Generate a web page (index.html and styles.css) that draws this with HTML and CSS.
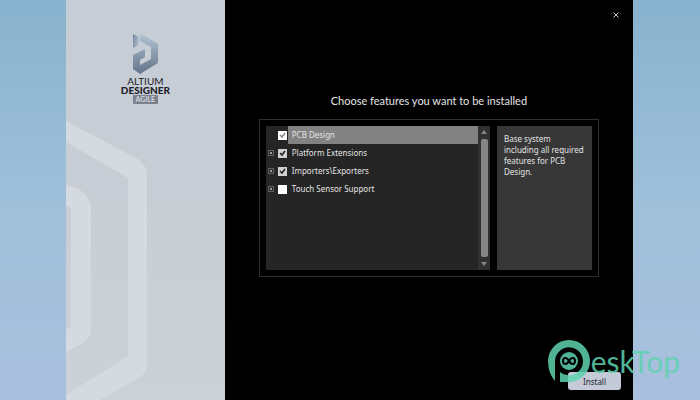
FILE: index.html
```html
<!DOCTYPE html>
<html lang="en">
<head>
<meta charset="utf-8">
<title>Altium Designer Agile Installer</title>
<link rel="stylesheet" href="styles.css">
</head>
<body>
<div class="installer">
    <aside class="sidebar">
        <svg class="pattern" viewBox="0 0 159 400" preserveAspectRatio="xMinYMin slice" aria-hidden="true">
            <path d="M0 121 L70 158 Q81 164 81 176 V363 Q81 373 73 378 L34 400 H-8 L62 356 V178 L0 142 Z"/>
            <path d="M0 185 L12 189 Q25 196 25 209 V329 Q25 338 15 344 L0 352 V330 L5 326 V208 L0 206 Z"/>
        </svg>
        <div class="brand">
            <svg class="logo" viewBox="0 0 27 41" aria-hidden="true">
                <defs>
                    <linearGradient id="steel" x1="0" y1="0" x2="0" y2="1">
                        <stop offset="0" stop-color="#b4c5d3"/>
                        <stop offset="0.45" stop-color="#8ea0b3"/>
                        <stop offset="1" stop-color="#64748a"/>
                    </linearGradient>
                    <linearGradient id="shade" x1="0" y1="0" x2="1" y2="0.4">
                        <stop offset="0" stop-color="#71849a"/>
                        <stop offset="1" stop-color="#adbecd"/>
                    </linearGradient>
                </defs>
                <path d="M8 0 L26 11 V30 L8 41 L1 36 V22 L13 16 V24 L8 27 V32 L19 26 V14 L8 8 Z" fill="url(#steel)"/>
                <path d="M1 1 L7 4 V12 L1 15 Z" fill="url(#shade)"/>
            </svg>
            <span class="brand-top">ALTIUM</span>
            <strong class="brand-name">DESIGNER</strong>
            <span class="edition">AGILE</span>
        </div>
    </aside>
    <main class="content">
        <button class="close" type="button" aria-label="Close">
            <svg viewBox="0 0 6 6" aria-hidden="true"><path d="M0.5 0.5 L5.5 5.5 M5.5 0.5 L0.5 5.5"/></svg>
        </button>
        <h1>Choose features you want to be installed</h1>
        <section class="features">
            <div class="tree">
                <ul class="list">
                    <li class="selected">
                        <span class="spacer"></span>
                        <input type="checkbox" id="pcb" checked>
                        <label for="pcb">PCB Design</label>
                    </li>
                    <li>
                        <button class="expand" type="button" aria-label="Expand Platform Extensions"></button>
                        <input type="checkbox" id="platform" checked>
                        <label for="platform">Platform Extensions</label>
                    </li>
                    <li>
                        <button class="expand" type="button" aria-label="Expand Importers\Exporters"></button>
                        <input type="checkbox" id="importers" checked>
                        <label for="importers">Importers\Exporters</label>
                    </li>
                    <li>
                        <button class="expand" type="button" aria-label="Expand Touch Sensor Support"></button>
                        <input type="checkbox" id="touch">
                        <label for="touch">Touch Sensor Support</label>
                    </li>
                </ul>
                <div class="scrollbar">
                    <svg viewBox="0 0 6 4" aria-hidden="true"><path d="M3 0 L6 4 H0 Z"/></svg>
                    <div class="thumb"></div>
                    <svg viewBox="0 0 6 4" aria-hidden="true"><path d="M0 0 H6 L3 4 Z"/></svg>
                </div>
            </div>
            <p class="info">Base system including all required features for PCB Design.</p>
        </section>
        <button class="install" type="button">Install</button>
    </main>
</div>
<div class="watermark">
    <svg viewBox="0 0 44 44" aria-hidden="true">
        <path d="M8 42 Q1 34 1 22 A21 21 0 1 1 22 43 H13 V33 A14 14 0 1 0 8 22 Z"/>
        <circle cx="22" cy="22" r="9"/>
        <path class="eight" d="M22 22 C20 18 16 18 16 22 C16 26 20 26 22 22 C24 18 28 18 28 22 C28 26 24 26 22 22 Z"/>
    </svg>
    <span>eskTop</span>
</div>
</body>
</html>
```

FILE: styles.css
```css
* {
    box-sizing: border-box;
}

body {
    margin: 0;
    min-height: 100vh;
    display: flex;
    position: relative;
    padding: 0 67px 0 66px;
    background: linear-gradient(#88b2ce, #9fc0da 50%, #a9c0de);
    font-family: "Noto Sans", "Open Sans", sans-serif;
    font-size: 8px;
}

button {
    padding: 0;
    border: 0;
    font: inherit;
}

svg {
    display: block;
}

.installer {
    flex: 1;
    display: grid;
    grid-template-columns: 28% 1fr;
    background: black;
}

.sidebar {
    position: relative;
    overflow: hidden;
    background: linear-gradient(#c5cdd5, #c9cdd5 50%, #cbd1d6);
}

.pattern {
    position: absolute;
    inset: 0;
    width: 100%;
    height: 100%;
    fill: #d5dae1;
}

.brand {
    position: relative;
    display: flex;
    flex-direction: column;
    align-items: center;
    padding-top: 33px;
    color: #1e2129;
    font-family: Lato, sans-serif;
    font-size: 10px;
    line-height: 9px;
}

.logo {
    width: 27px;
    height: 41px;
    margin-bottom: 3px;
}

.brand-name {
    font-weight: 900;
}

.edition {
    padding: 0 3px;
    border-radius: 1px;
    background: #7c818d;
    color: #d5d9e0;
    font-size: 7px;
    font-weight: bold;
}

.content {
    display: flex;
    flex-direction: column;
    padding: 12px 12px 10px 34px;
    color: #e4e4e4;
}

.close {
    align-self: flex-end;
    padding: 0 2px;
    background: none;
}

.close svg {
    width: 6px;
    height: 6px;
    stroke: #c8c8c8;
    fill: none;
}

h1 {
    margin: 75px 22px 10px 0;
    font-family: Lato, sans-serif;
    font-size: 11px;
    font-weight: normal;
    line-height: 16px;
    text-align: center;
}

.features {
    display: grid;
    grid-template-columns: 1fr 95px;
    gap: 7px;
    height: 158px;
    margin-right: 22px;
    padding: 6px;
    border: 1px solid #303030;
}

.tree {
    display: flex;
    background: #252525;
}

.list {
    flex: 1;
    margin: 0;
    padding: 0;
    list-style: none;
}

.list li {
    display: flex;
    align-items: center;
    height: 18px;
    padding-left: 2px;
}

.expand, .spacer {
    width: 6px;
    height: 6px;
    margin-right: 4px;
}

.expand {
    border: 1px solid #606060;
    background:
        linear-gradient(#a0a0a0, #a0a0a0) center / 2px 2px no-repeat;
}

.list input {
    appearance: none;
    width: 9px;
    height: 9px;
    margin: 0 1px 0 0;
    background: white;
}

.list input:checked {
    background: #d0d0d0 url("data:image/svg+xml,%3Csvg xmlns='http://www.w3.org/2000/svg' viewBox='0 0 9 9'%3E%3Cpath d='M2 4l2 2 3-4' fill='none' stroke='%23222' stroke-width='1.5'/%3E%3C/svg%3E");
}

.list .selected input {
    background: white url("data:image/svg+xml,%3Csvg xmlns='http://www.w3.org/2000/svg' viewBox='0 0 9 9'%3E%3Cpath d='M2 4l2 2 3-4' fill='none' stroke='%23888' stroke-width='1.5'/%3E%3C/svg%3E");
}

.list label {
    flex: 1;
    padding-left: 4px;
    line-height: 18px;
}

.selected label {
    background: #828282;
}

.scrollbar {
    display: flex;
    flex-direction: column;
    align-items: center;
    gap: 5px;
    width: 12px;
    padding: 4px 0;
    background: #303030;
}

.scrollbar svg {
    width: 6px;
    height: 4px;
    fill: #858585;
}

.thumb {
    flex: 1;
    width: 7px;
    border-radius: 2px;
    background: #858585;
}

.info {
    margin: 0;
    padding: 7px;
    background: #373737;
    line-height: 11px;
}

.install {
    align-self: flex-end;
    width: 53px;
    height: 18px;
    margin-top: auto;
    border-radius: 3px;
    background: #c4cad7;
    color: #22252e;
}

/* site mark laid over the bottom right corner */
.watermark {
    position: absolute;
    right: 20px;
    bottom: 17px;
    display: flex;
    align-items: center;
    color: #5fd3b0;
    font-family: Lato, sans-serif;
    font-size: 30px;
    line-height: 30px;
    opacity: 0.85;
    pointer-events: none;
}

.watermark svg {
    width: 44px;
    height: 44px;
    fill: currentColor;
}

.watermark .eight {
    fill: none;
    stroke: black;
    stroke-width: 2;
}
```
